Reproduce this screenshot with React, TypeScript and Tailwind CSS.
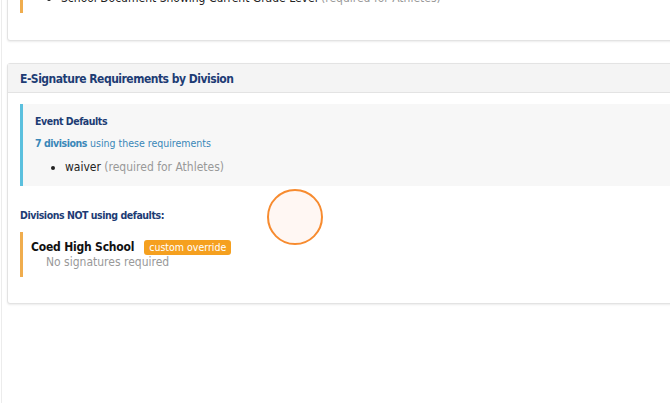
import React from 'react';

const font = "font-['DejaVu_Sans_Condensed','DejaVu_Sans',Verdana,sans-serif] font-stretch-condensed";

const Card = ({ children, className = '' }: { children: React.ReactNode; className?: string }) => (
  <div
    className={`rounded-[3px] border border-[#e3e3e3] bg-white shadow-[0_1px_2px_rgba(0,0,0,0.08)] ${className}`}
  >
    {children}
  </div>
);

const App = () => {
  return (
    <div className={`relative h-screen min-h-[403px] w-full overflow-hidden bg-white ${font}`}>
      <div className="ml-px min-h-[460px] border-l border-[#ececec] pl-[5px]">
        <div className="w-[720px] -mt-[25px]">
          {/* previous section, scrolled mostly out of view */}
          <Card>
            <div className="px-[12px] pt-[10px] pb-[27px]">
              <div className="border-l-[3px] border-[#f0ad4e] pl-[26px] pb-[3px]">
                <ul className="list-disc pl-[12px] text-[12px] leading-[24px] text-[#222]">
                  <li>
                    School Document Showing Current Grade Level{' '}
                    <span className="text-[#999]">(required for Athletes)</span>
                  </li>
                </ul>
              </div>
            </div>
          </Card>

          <Card className="mt-[22px]">
            <div className="flex h-[29px] items-center border-b border-[#e3e3e3] bg-[#f4f4f4] px-[12px] pt-[2px]">
              <h3 className="text-[12px] font-bold tracking-[-0.5px] text-[#1d3c74]">
                E-Signature Requirements by Division
              </h3>
            </div>
            <div className="px-[12px] pt-[11px] pb-[26px]">
              <div className="border-l-[3px] border-[#5bc0de] bg-[#f7f7f7] pl-[12px] pt-[9px] pb-[10px]">
                <div className="text-[10.5px] font-bold leading-[16px] tracking-[-0.45px] text-[#1d3c74]">
                  Event Defaults
                </div>
                <div className="mt-[6px] text-[10.5px] leading-[16px] text-[#3a87b8]">
                  <span className="font-bold tracking-[-0.45px]">7 divisions</span> using these requirements
                </div>
                <ul className="mt-[7px] list-disc pl-[30px] text-[12px] leading-[18px] text-[#222]">
                  <li>
                    waiver <span className="text-[#999]">(required for Athletes)</span>
                  </li>
                </ul>
              </div>

              <div className="mt-[21px] text-[10.5px] font-bold leading-[16px] tracking-[-0.45px] text-[#1d3c74]">
                Divisions NOT using defaults:
              </div>

              <div className="mt-[9px] border-l-[3px] border-[#f0ad4e] pl-[8px] pt-[8px] pb-[7px]">
                <div className="flex items-center gap-[10px]">
                  <span className="text-[12px] font-bold leading-[15px] tracking-[-0.2px] text-[#111]">
                    Coed High School
                  </span>
                  <span className="rounded-[3px] bg-[#f5a01f] px-[5px] text-[10.5px] leading-[15px] text-white">
                    custom override
                  </span>
                </div>
                <div className="pl-[15px] text-[12px] leading-[15px] text-[#999]">No signatures required</div>
              </div>
            </div>
          </Card>
        </div>
      </div>

      {/* click highlight */}
      <div className="pointer-events-none absolute left-[267px] top-[189px] h-[56px] w-[56px] rounded-full border-2 border-[#f78b2f] bg-[#fff7f3]" />
    </div>
  );
};

export default App;
